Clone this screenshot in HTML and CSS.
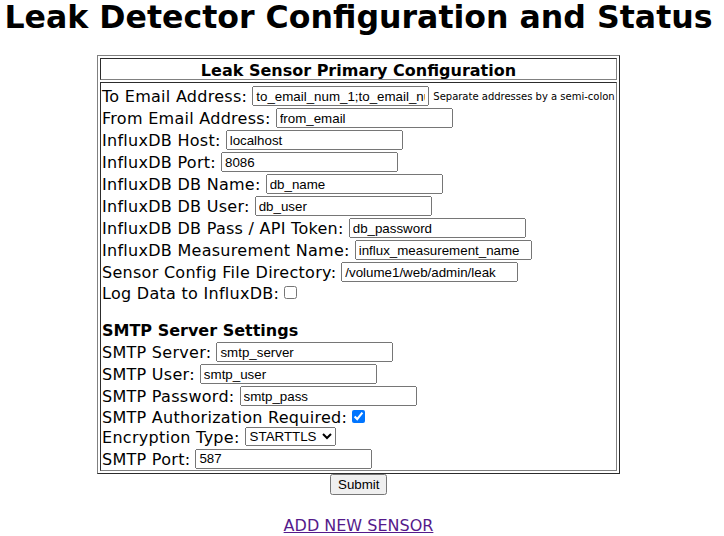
FILE: index.html
```html
<!DOCTYPE html>
<html>
<head>
<meta charset="utf-8">
<title>Leak Detector Configuration and Status</title>
<link rel="stylesheet" href="styles.css">
</head>
<body>
<h1 class="title">Leak Detector Configuration and Status</h1>
<form class="cfg-form">
  <table class="cfg">
    <tr><th class="cfg-head">Leak Sensor Primary Configuration</th></tr>
    <tr><td class="cfg-body">
      <div class="r r22"><span class="lbl">To Email Address:</span><input class="txt" type="text" value="to_email_num_1;to_email_num_2"><span class="note">Separate addresses by a semi-colon</span></div>
      <div class="r r22"><span class="lbl">From Email Address:</span><input class="txt" type="text" value="from_email"></div>
      <div class="r r22"><span class="lbl">InfluxDB Host:</span><input class="txt" type="text" value="localhost"></div>
      <div class="r r22"><span class="lbl">InfluxDB Port:</span><input class="txt" type="text" value="8086"></div>
      <div class="r r22"><span class="lbl">InfluxDB DB Name:</span><input class="txt" type="text" value="db_name"></div>
      <div class="r r22"><span class="lbl">InfluxDB DB User:</span><input class="txt" type="text" value="db_user"></div>
      <div class="r r22"><span class="lbl">InfluxDB DB Pass / API Token:</span><input class="txt" type="text" value="db_password"></div>
      <div class="r r22"><span class="lbl">InfluxDB Measurement Name:</span><input class="txt" type="text" value="influx_measurement_name"></div>
      <div class="r r22"><span class="lbl">Sensor Config File Directory:</span><input class="txt" type="text" value="/volume1/web/admin/leak"></div>
      <div class="r r20"><span class="lbl">Log Data to InfluxDB:</span><input class="chk" type="checkbox"></div>
      <div class="blank"></div>
      <div class="section">SMTP Server Settings</div>
      <div class="r r22"><span class="lbl">SMTP Server:</span><input class="txt" type="text" value="smtp_server"></div>
      <div class="r r22"><span class="lbl">SMTP User:</span><input class="txt" type="text" value="smtp_user"></div>
      <div class="r r22"><span class="lbl">SMTP Password:</span><input class="txt" type="text" value="smtp_pass"></div>
      <div class="r r20"><span class="lbl">SMTP Authorization Required:</span><input class="chk" type="checkbox" checked></div>
      <div class="r r20"><span class="lbl">Encryption Type:</span><select class="sel"><option>STARTTLS</option><option>SSL/TLS</option><option>None</option></select></div>
      <div class="r r23"><span class="lbl">SMTP Port:</span><input class="txt" type="text" value="587"></div>
    </td></tr>
  </table>
  <input class="submit" type="submit" value="Submit">
</form>
<a class="add" href="#">ADD NEW SENSOR</a>
</body>
</html>
```
FILE: styles.css
```css
body {
  margin: 0;
  width: 717px;
  display: flex;
  flex-direction: column;
  align-items: center;
  font-family: "DejaVu Sans", Verdana, sans-serif;
  color: #000;
  background: #fff;
}

.title {
  margin: 0 0 21px;
  font-family: "DejaVu Sans", Verdana, sans-serif;
  font-weight: bold;
  font-size: 31.6px;
  line-height: 34px;
  white-space: nowrap;
  text-align: center;
}

.cfg-form {
  display: flex;
  flex-direction: column;
  align-items: center;
}

.cfg {
  width: 523px;
  border: 1px outset grey;
  border-spacing: 2px;
}

.cfg-head,
.cfg-body {
  border: 1px inset grey;
  padding: 1px;
}

.cfg-head {
  padding: 3px 1px 0;
  font: bold 16px/17px "DejaVu Sans", Verdana, sans-serif;
  text-align: center;
}

.cfg-body {
  font: 16px "DejaVu Sans", Verdana, sans-serif;
  text-align: left;
}

.r {
  display: flex;
  align-items: center;
  gap: 5px;
  white-space: nowrap;
}

.r22 { height: 22px; }
.r20 { height: 20px; }
.r23 { height: 23px; }

.lbl {
  padding-top: 3px;
  line-height: normal;
  letter-spacing: 0.28px;
}

.txt {
  box-sizing: border-box;
  width: 177px;
  height: 20px;
  margin: 2px 0 0;
  padding: 1px 2px;
  font: 13.333px "Liberation Sans", Arial, sans-serif;
}

.note {
  font-size: 10px;
  margin-left: -1px;
  padding-top: 2px;
}

.chk {
  width: 13px;
  height: 13px;
  margin: 3px 3px 3px 0;
}

.sel {
  width: 91px;
  height: 19px;
  margin: 0;
  font: 13.333px "Liberation Sans", Arial, sans-serif;
}

.blank {
  height: 19px;
}

.section {
  height: 19px;
  font-weight: bold;
  line-height: 19px;
}

.submit {
  width: 57px;
  height: 21px;
  margin: 0;
  padding: 1px 6px;
  font: 13.333px "Liberation Sans", Arial, sans-serif;
}

.add {
  margin-top: 21px;
  font-size: 16px;
  line-height: normal;
  color: #551a8b;
}
```
